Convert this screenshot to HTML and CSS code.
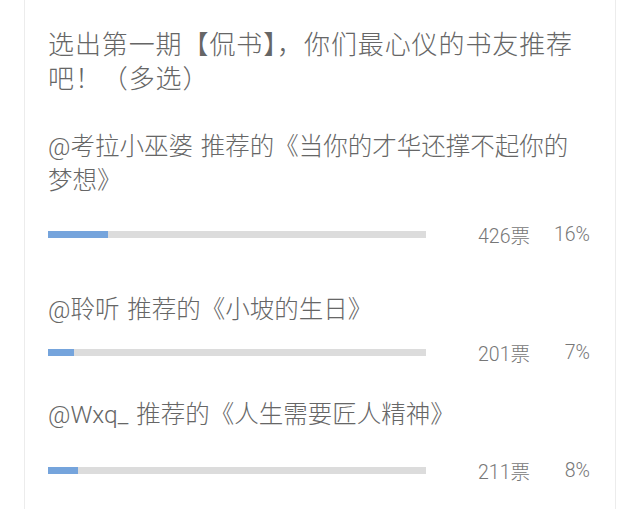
FILE: index.html
```html
<!DOCTYPE html>
<html lang="zh">
<head>
<meta charset="utf-8">
<link rel="stylesheet" href="styles.css">
</head>
<body>
<div class="card">
  <h1 class="title">选出第一期【侃书】，你们最心仪的书友推荐吧！（多选）</h1>
  <div class="option opt1">
    <p class="label">@考拉小巫婆 推荐的《当你的才华还撑不起你的梦想》</p>
    <div class="result">
      <div class="bar"><div class="fill" style="width:16%"></div></div>
      <span class="votes">426票</span>
      <span class="pct">16%</span>
    </div>
  </div>
  <div class="option opt2">
    <p class="label">@聆听 推荐的《小坡的生日》</p>
    <div class="result">
      <div class="bar"><div class="fill" style="width:7%"></div></div>
      <span class="votes">201票</span>
      <span class="pct">7%</span>
    </div>
  </div>
  <div class="option opt3">
    <p class="label">@Wxq_ 推荐的《人生需要匠人精神》</p>
    <div class="result">
      <div class="bar"><div class="fill" style="width:8%"></div></div>
      <span class="votes">211票</span>
      <span class="pct">8%</span>
    </div>
  </div>
</div>
</body>
</html>
```
FILE: styles.css
```css
html, body {
  margin: 0;
  padding: 0;
  background: #fff;
}
body {
  font-family: Roboto, "Noto Sans CJK SC", sans-serif;
  font-weight: 300;
  color: #666;
}
.card {
  margin-left: 24px;
  width: 592px;
  min-height: 509px;
  border-left: 1px solid #ececec;
  border-right: 1px solid #ececec;
  padding: 28px 0 0 23px;
  box-sizing: border-box;
}
.title {
  margin: 0;
  font-size: 26px;
  font-weight: 300;
  line-height: 34px;
  width: 530px;
  letter-spacing: 0.9px;
}
.option {
  margin-top: 34px;
}
.opt2 { margin-top: 49px; }
.opt3 { margin-top: 36px; }
.label {
  margin: 0;
  font-size: 24.5px;
  font-weight: 300;
  line-height: 34px;
  width: 540px;
  word-spacing: 2px;
}
.result {
  display: flex;
  align-items: center;
  margin-top: 26px;
  height: 20px;
}
.opt2 .result { margin-top: 15px; }
.opt3 .result { margin-top: 28px; }
.bar {
  width: 378px;
  height: 7px;
  background: #dcdcdc;
}
.fill {
  height: 100%;
  background: #75a4dc;
}
.votes {
  width: 104px;
  text-align: right;
  font-size: 19.5px;
  color: #777;
}
.pct {
  width: 60px;
  text-align: right;
  font-size: 19.5px;
  color: #777;
}
```
